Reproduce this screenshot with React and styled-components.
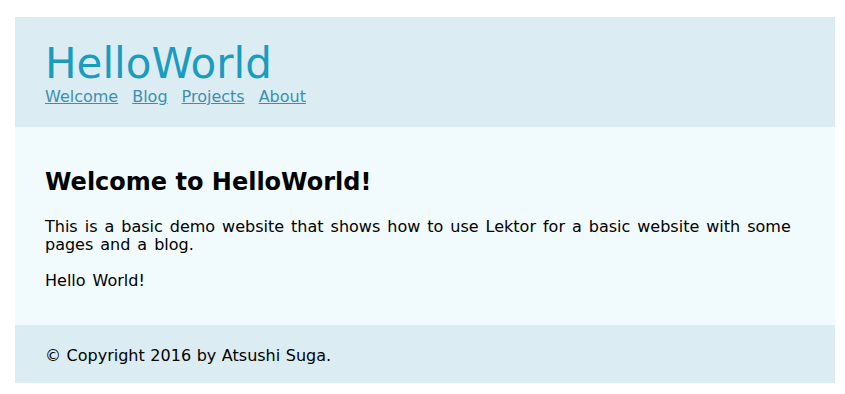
import React from "react";
import styled, { createGlobalStyle } from "styled-components";

const Global = createGlobalStyle`
  html, body { margin: 0; padding: 0; background: #ffffff; }
  body {
    font-family: "DejaVu Sans", Verdana, sans-serif;
    font-size: 16px;
    color: #000;
  }
`;

const Page = styled.div`
  width: 820px;
  margin: 17px 0 0 15px;
`;

const Header = styled.header`
  background: #dbedf3;
  padding: 24px 30px 20px 30px;
`;

const Title = styled.h1`
  margin: 0;
  font-size: 42px;
  font-weight: normal;
  line-height: 46px;
  color: #1a9bc0;
`;

const Nav = styled.nav`
  display: flex;
  gap: 14px;
`;

const NavLink = styled.a`
  color: #3b8fb0;
  text-decoration: underline;
  font-size: 16px;
  line-height: 20px;
`;

const Main = styled.main`
  background: #f1fafc;
  padding: 40px 30px 35px 30px;
`;

const Heading = styled.h2`
  margin: 0 0 21px 0;
  font-size: 24px;
  font-weight: bold;
  line-height: 30px;
`;

const Para = styled.p`
  margin: 0 0 18px 0;
  line-height: 18px;
  word-spacing: 1.9px;
  &:last-child { margin-bottom: 0; }
`;

const Footer = styled.footer`
  background: #dbedf3;
  padding: 22px 30px 18px 30px;
  line-height: 18px;
  word-spacing: 0.5px;
`;

export default function App() {
  return (
    <>
      <Global />
      <Page>
        <Header>
          <Title>HelloWorld</Title>
          <Nav>
            <NavLink href="#">Welcome</NavLink>
            <NavLink href="#">Blog</NavLink>
            <NavLink href="#">Projects</NavLink>
            <NavLink href="#">About</NavLink>
          </Nav>
        </Header>
        <Main>
          <Heading>Welcome to HelloWorld!</Heading>
          <Para>
            This is a basic demo website that shows how to use Lektor for a
            basic website with some pages and a blog.
          </Para>
          <Para>Hello World!</Para>
        </Main>
        <Footer>© Copyright 2016 by Atsushi Suga.</Footer>
      </Page>
    </>
  );
}
